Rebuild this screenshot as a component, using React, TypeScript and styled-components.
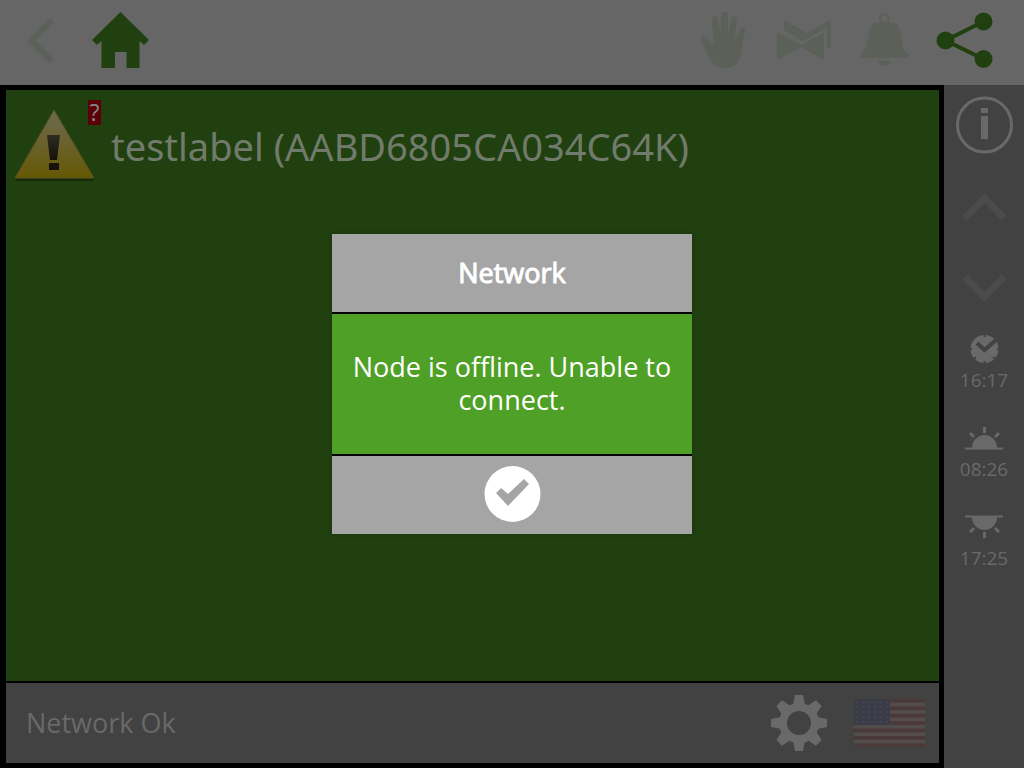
import React from 'react';
import styled, { createGlobalStyle } from 'styled-components';

const c = {
  bar: '#666666',
  green: '#21400f',
  faint: '#5b6159',
  side: '#424242',
  sideFaint: '#4b4b4b',
  icon: '#696969',
};

const GlobalStyle = createGlobalStyle`
  *, *::before, *::after { box-sizing: border-box; }
  body {
    margin: 0;
    background: #000;
    font-family: "Open Sans", "Noto Sans", sans-serif;
  }
  h1, h2, p { margin: 0; font-weight: 400; }
  svg { display: block; }
`;

const Screen = styled.div`
  min-height: 100vh;
  display: flex;
  flex-direction: column;
`;

const TopBar = styled.header`
  display: flex;
  justify-content: space-between;
  padding: 0 20px 5px 0;
  background: ${c.bar};
`;

const Group = styled.nav`
  display: flex;
`;

const IconButton = styled.button<{ $tone: string }>`
  display: flex;
  flex-shrink: 0;
  align-items: center;
  justify-content: center;
  width: 80px;
  height: 80px;
  padding: 0;
  border: 0;
  background: none;
  color: ${(p) => p.$tone};
  cursor: pointer;
`;

const Body = styled.div`
  flex: 1;
  display: flex;
`;

const Main = styled.main`
  flex: 1;
  display: flex;
  flex-direction: column;
  gap: 2px;
  padding: 5px 5px 5px 6px;
  background: #000;
`;

const NodeArea = styled.section`
  flex: 1;
  padding: 8px;
  background: ${c.green};
`;

const NodeRow = styled.div`
  display: flex;
  align-items: flex-start;
`;

const NodeIcon = styled.div`
  position: relative;
  width: 97px;
  padding-top: 11px;
`;

const Flag = styled.span`
  position: absolute;
  top: 2px;
  right: 10px;
  width: 13px;
  height: 25px;
  background: #5c0008;
  color: #868686;
  font-size: 23px;
  line-height: 25px;
  text-align: center;
`;

const NodeTitle = styled.h1`
  padding-top: 24px;
  color: #717b6c;
  font-family: "Noto Sans", "Open Sans", sans-serif;
  font-size: 38px;
  line-height: 48px;
  white-space: nowrap;
`;

const StatusBar = styled.footer`
  display: flex;
  align-items: center;
  gap: 10px;
  height: 80px;
  padding: 0 10px 0 20px;
  background: ${c.side};
`;

const StatusText = styled.p`
  flex: 1;
  color: ${c.icon};
  font-size: 27px;
  line-height: 36px;
`;

const Sidebar = styled.aside`
  display: flex;
  flex-direction: column;
  width: 80px;
  background: ${c.side};
`;

const TimeList = styled.div`
  display: flex;
  flex-direction: column;
  gap: 29px;
  padding-top: 9px;
`;

const TimeItem = styled.div`
  display: flex;
  flex-direction: column;
  align-items: center;
  height: 60px;
  color: ${c.icon};
  font-size: 19px;
  line-height: 24px;
`;

const TimeIcon = styled.div`
  height: 34px;
`;

const Backdrop = styled.div`
  position: fixed;
  inset: 0;
  display: flex;
  align-items: center;
  justify-content: center;
`;

const Dialog = styled.section`
  display: flex;
  flex-direction: column;
  gap: 2px;
  width: 360px;
  background: #000;
  color: #fff;
  box-shadow: 0 0 4px #1a330c;
`;

const DialogTitle = styled.h2`
  background: #a5a5a5;
  font-size: 27px;
  line-height: 78px;
  text-align: center;
  -webkit-text-stroke: 1px #fff;
`;

const DialogText = styled.p`
  display: flex;
  align-items: center;
  height: 140px;
  padding: 0 16px 2px;
  background: #4fa026;
  font-size: 27px;
  line-height: 33px;
  text-align: center;
`;

const DialogActions = styled.div`
  display: flex;
  align-items: center;
  justify-content: center;
  height: 78px;
  padding-bottom: 2px;
  background: #a5a5a5;
`;

const BackIcon = () => (
  <svg width="58" height="58" viewBox="0 0 58 58" aria-hidden="true">
    <path d="M41 9 20.500 29.500 41 50" fill="none" stroke="currentColor" strokeWidth="6" />
  </svg>
);

const HomeIcon = () => (
  <svg width="58" height="58" viewBox="0 0 58 58" aria-hidden="true">
    <path d="M29.500 1 58 29 53 34 48.500 30V57H35.500V41H24V57H10.500V30L6 34 1 29Z" fill="currentColor" />
  </svg>
);

const HandIcon = () => (
  <svg width="58" height="58" viewBox="0 0 58 58" aria-hidden="true">
    <path
      d="M17 8Q17 5 20 5T23 8L26 26V4Q26 1 29.500 1T33 4V26L36 8Q37 5 39.500 5.500T42 9L39 31 45 18Q47 15 49 17T50 21L46 39Q46 57 30 57 19 57 14 46L6 29Q5 26 7 25T11 26L19 35Z"
      fill="currentColor"
    />
  </svg>
);

const ValveIcon = () => (
  <svg width="58" height="58" viewBox="0 0 58 58" aria-hidden="true">
    <g fill="currentColor">
      <path d="M2 21 26 34 49 21V49L26 36 2 49Z" />
      <path d="M9 9 32 22 56 8V37H52V17L28 30 9 19Z" />
    </g>
    <path d="M2 19 26 33 50 19" fill="none" stroke={c.bar} strokeWidth="2" />
  </svg>
);

const BellIcon = () => (
  <svg width="58" height="58" viewBox="0 0 58 58" aria-hidden="true">
    <circle cx="29.500" cy="8" r="4.500" fill="none" stroke="currentColor" strokeWidth="2.500" />
    <path
      d="M20 12H39Q44 13 45 19L47 32Q48 40 54 44V47H5V44Q11 40 12 32L15 19Q16 13 20 12ZM23 50H36Q35 55 29.500 55T23 50Z"
      fill="currentColor"
    />
  </svg>
);

const ShareIcon = () => (
  <svg width="58" height="58" viewBox="0 0 58 58" aria-hidden="true">
    <path d="M48.500 10.500 10.500 29.500 48.500 48" fill="none" stroke="currentColor" strokeWidth="4" />
    <g fill="currentColor">
      <circle cx="48.500" cy="10.500" r="9" />
      <circle cx="10.500" cy="29.500" r="9" />
      <circle cx="48.500" cy="48" r="9" />
    </g>
  </svg>
);

const InfoIcon = () => (
  <svg width="58" height="58" viewBox="0 0 58 58" aria-hidden="true">
    <circle cx="29.500" cy="29" r="27" fill="none" stroke="currentColor" strokeWidth="3" />
    <path d="M26 12H33V17H26ZM26 20H33V43H26Z" fill="currentColor" />
  </svg>
);

const ArrowIcon = ({ down }: { down?: boolean }) => (
  <svg width="58" height="58" viewBox="0 0 58 58" aria-hidden="true">
    <path
      d={down ? 'M10 21 29.500 41 49 21' : 'M10 42 29.500 22 49 42'}
      fill="none"
      stroke="currentColor"
      strokeWidth="7"
    />
  </svg>
);

const ClockIcon = () => (
  <svg width="40" height="30" viewBox="0 0 40 30" aria-hidden="true">
    <circle cx="20.500" cy="15" r="14" fill="currentColor" />
    <path d="M13 9 20.500 16 33 5" fill="none" stroke={c.side} strokeWidth="4" />
    <path d="M20.500 0V3M20.500 27V30M5 15H8M33 15H36M10 25 12 23M31 25 29 23" stroke={c.side} strokeWidth="2" />
  </svg>
);

const SunIcon = ({ set }: { set?: boolean }) => (
  <svg width="40" height="30" viewBox="0 0 40 30" aria-hidden="true">
    <g transform={set ? 'matrix(1 0 0 -1 0 30)' : undefined} stroke="currentColor" strokeWidth="2">
      <path d="M8 25A12.500 13 0 0 1 33 25Z" fill="currentColor" stroke="none" />
      <path d="M1 25.500H39" fill="none" />
      <path d="M20.500 4V10M6 10 10 14M35 10 31 14" fill="none" strokeWidth="3" />
    </g>
  </svg>
);

const WarningIcon = () => (
  <svg width="82" height="74" viewBox="0 0 82 74" aria-hidden="true">
    <defs>
      <linearGradient id="warnFill" x1="0" y1="0" x2="0" y2="1">
        <stop offset="0" stopColor="#6c6b50" />
        <stop offset="0.5" stopColor="#6a612c" />
        <stop offset="1" stopColor="#655904" />
      </linearGradient>
      <linearGradient id="warnMark" x1="0" y1="0" x2="0" y2="1">
        <stop offset="0" stopColor="#2e2c20" />
        <stop offset="1" stopColor="#14120a" />
      </linearGradient>
    </defs>
    <path d="M3 72H79L81 70H1Z" fill="#182a08" />
    <path d="M40 1 80 69H1Z" fill="url(#warnFill)" stroke="#57501c" strokeWidth="1" />
    <path d="M33 26H46L43 51H36Z" fill="url(#warnMark)" />
    <path d="M35 54H45V61H35Z" fill="#14120a" />
  </svg>
);

const GearIcon = () => (
  <svg width="58" height="58" viewBox="-29 -29 58 58" aria-hidden="true">
    <circle r="16" fill="none" stroke="currentColor" strokeWidth="8" />
    {[0, 45, 90, 135, 180, 225, 270, 315].map((a) => (
      <path key={a} d="M-6 -18-4 -28H4L6 -18Z" transform={`rotate(${a})`} fill="currentColor" />
    ))}
  </svg>
);

const UsFlag = () => (
  <svg width="71" height="48" viewBox="0 0 71 48" aria-hidden="true">
    <rect width="71" height="48" fill="#524c4c" />
    {[0, 1, 2, 3, 4, 5, 6].map((i) => (
      <rect key={i} y={i * 7.4} width="71" height="3.700" fill="#4b3939" />
    ))}
    <rect width="36" height="26" fill="#3a3c47" />
    {[0, 1, 2, 3, 4].map((row) =>
      [0, 1, 2, 3, 4, 5].map((col) => (
        <circle key={`${row}-${col}`} cx={3 + col * 6} cy={3 + row * 5} r="1" fill="#464852" />
      )),
    )}
  </svg>
);

const CheckIcon = () => (
  <svg width="58" height="58" viewBox="0 0 58 58" aria-hidden="true">
    <circle cx="29.500" cy="29" r="28" fill="#fff" />
    <path d="M13 28 25 41 46 19 41 14 25 29 18 23Z" fill="#a5a5a5" />
  </svg>
);

export default function App() {
  return (
    <>
      <GlobalStyle />
      <Screen>
        <TopBar>
          <Group>
            <IconButton $tone={c.faint} aria-label="Back"><BackIcon /></IconButton>
            <IconButton $tone={c.green} aria-label="Home"><HomeIcon /></IconButton>
          </Group>
          <Group>
            <IconButton $tone={c.faint} aria-label="Manual"><HandIcon /></IconButton>
            <IconButton $tone={c.faint} aria-label="Valves"><ValveIcon /></IconButton>
            <IconButton $tone={c.faint} aria-label="Alarms"><BellIcon /></IconButton>
            <IconButton $tone={c.green} aria-label="Nodes"><ShareIcon /></IconButton>
          </Group>
        </TopBar>
        <Body>
          <Main>
            <NodeArea>
              <NodeRow>
                <NodeIcon>
                  <WarningIcon />
                  <Flag>?</Flag>
                </NodeIcon>
                <NodeTitle>testlabel (AABD6805CA034C64K)</NodeTitle>
              </NodeRow>
            </NodeArea>
            <StatusBar>
              <StatusText>Network Ok</StatusText>
              <IconButton $tone={c.icon} aria-label="Settings"><GearIcon /></IconButton>
              <IconButton $tone={c.icon} aria-label="Language"><UsFlag /></IconButton>
            </StatusBar>
          </Main>
          <Sidebar>
            <IconButton $tone={c.icon} aria-label="Info"><InfoIcon /></IconButton>
            <IconButton $tone={c.sideFaint} aria-label="Up"><ArrowIcon /></IconButton>
            <IconButton $tone={c.sideFaint} aria-label="Down"><ArrowIcon down /></IconButton>
            <TimeList>
              <TimeItem><TimeIcon><ClockIcon /></TimeIcon>16:17</TimeItem>
              <TimeItem><TimeIcon><SunIcon /></TimeIcon>08:26</TimeItem>
              <TimeItem><TimeIcon><SunIcon set /></TimeIcon>17:25</TimeItem>
            </TimeList>
          </Sidebar>
        </Body>
      </Screen>
      <Backdrop>
        <Dialog role="dialog" aria-labelledby="dialog-title">
          <DialogTitle id="dialog-title">Network</DialogTitle>
          <DialogText>Node is offline. Unable to connect.</DialogText>
          <DialogActions>
            <IconButton $tone="#fff" aria-label="OK"><CheckIcon /></IconButton>
          </DialogActions>
        </Dialog>
      </Backdrop>
    </>
  );
}
